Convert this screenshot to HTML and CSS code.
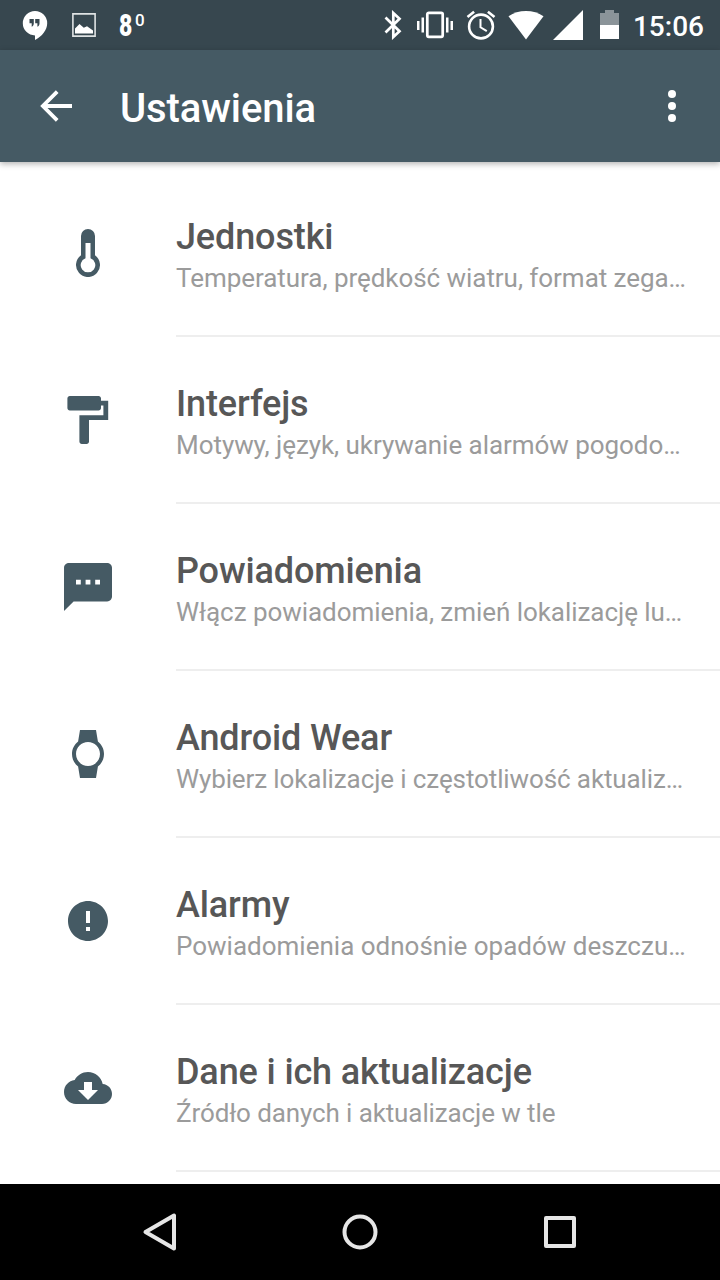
FILE: index.html
```html
<!DOCTYPE html>
<html lang="pl">
<head>
<meta charset="utf-8">
<title>Ustawienia</title>
<link rel="stylesheet" href="styles.css">
</head>
<body>
<div class="screen">
  <div class="status">
    <svg class="hangouts" width="26" height="30" viewBox="0 0 26 30"><path fill="#fff" d="M13 1a12.2 12.2 0 0 0 0 24.4V30c7-3.6 12.2-10 12.2-16.8A12.2 12.2 0 0 0 13 1z"/><path fill="#37474f" d="M7.5 9h4.3v4.5c0 1.6-.8 2.7-2.1 3.2v-3.4H7.500zM13.200 9h4.300v4.500c0 1.600-.8 2.700-2.100 3.200v-3.400h-2.200z"/></svg>
    <svg class="picture" width="24" height="24" viewBox="0 0 24 24"><path fill="none" stroke="#dfe3e4" stroke-width="1.600" d="M.9.9h22.200v22.200H.9z"/><path fill="#fff" d="M3 20.500v-5l4.500-4.500 4.300 3.800 3.200-1.600 6 4.300v3z"/></svg>
    <div class="degrees"><span class="digit">8</span><span class="degree">0</span></div>
    <div class="spacer"></div>
    <svg class="bluetooth" width="20" height="30" viewBox="0 0 20 30"><path fill="none" stroke="#fff" stroke-width="2.700" d="M2.500 7.500l14 13.800-6.200 5.700V3l6.200 5.700L2.500 22.500"/></svg>
    <svg class="vibrate" width="36" height="30" viewBox="0 0 36 30"><rect x="10.300" y="2.800" width="15.400" height="24" rx="1.500" fill="none" stroke="#fff" stroke-width="2.700"/><path fill="#fff" d="M0 11h2.500v9H0zM4.500 7.500H7v15H4.500zM29 7.500h2.500v15H29zM33.500 11H36v9h-2.500z"/></svg>
    <svg class="alarm" width="30" height="30" viewBox="0 0 30 30"><g fill="none" stroke="#fff" stroke-width="2.600"><circle cx="15" cy="16.500" r="11.900"/><path d="M1.500 7l6.600-5.300M28.500 7l-6.600-5.300"/><path stroke-width="2" d="M14.500 9v8.300l6.300 3.900"/></g></svg>
    <svg class="wifi" width="36" height="30" viewBox="0 0 36 30"><path fill="#fff" d="M18 29.500L.5 6.300C5.500 2.900 11.500 1 18 1s12.500 1.900 17.500 5.300z"/></svg>
    <svg class="signal" width="30" height="30" viewBox="0 0 30 30"><path fill="#fff" d="M30 0v30H0z"/></svg>
    <svg class="battery" width="19" height="30" viewBox="0 0 19 30"><path fill="#8b9499" d="M0 3h5V0h9v3h5v13H0z"/><path fill="#fff" d="M0 15h19v14H0z"/></svg>
    <div class="time">15:06</div>
  </div>
  <div class="appbar">
    <svg class="back" width="34" height="34" viewBox="0 0 34 34"><path fill="none" stroke="#fff" stroke-width="3.800" d="M33 17H4M18.200 2.700L3.900 17l14.300 14.300"/></svg>
    <h1 class="heading">Ustawienia</h1>
    <svg class="more" width="8" height="32" viewBox="0 0 8 32"><g fill="#fff"><circle cx="4" cy="4" r="4"/><circle cx="4" cy="16" r="4"/><circle cx="4" cy="28" r="4"/></g></svg>
  </div>
  <div class="list">
    <div class="row">
      <svg class="icon" viewBox="0 0 48 48"><path fill-rule="evenodd" d="M17 7a7 7 0 0 1 14 0v19.300a12 12 0 1 1-14 0zM21.500 14v15.200a7.300 7.300 0 1 0 5 0V14z"/></svg>
      <div class="content"><div class="title">Jednostki</div><div class="sub">Temperatura, prędkość wiatru, format zega…</div></div>
    </div>
    <div class="row">
      <svg class="icon" viewBox="0 0 48 48"><path transform="translate(-6.200 -4.800) scale(2.400)" d="M18 4V3c0-.55-.45-1-1-1H5c-.55 0-1 .45-1 1v4c0 .55.45 1 1 1h12c.55 0 1-.45 1-1V6h1v4H9v11c0 .55.45 1 1 1h2c.55 0 1-.45 1-1v-9h8V4h-3z"/></svg>
      <div class="content"><div class="title">Interfejs</div><div class="sub">Motywy, język, ukrywanie alarmów pogodo…</div></div>
    </div>
    <div class="row">
      <svg class="icon" viewBox="2 2 20 20"><path d="M20 2H4c-1.100 0-1.990.9-1.990 2L2 22l4-4h14c1.100 0 2-.9 2-2V4c0-1.100-.9-2-2-2zM9 11H7V9h2v2zm4 0h-2V9h2v2zm4 0h-2V9h2v2z"/></svg>
      <div class="content"><div class="title">Powiadomienia</div><div class="sub">Włącz powiadomienia, zmień lokalizację lu…</div></div>
    </div>
    <div class="row">
      <svg class="icon" viewBox="0 0 24 24"><path d="M20 12c0-2.540-1.190-4.810-3.040-6.270L16 0H8l-.95 5.730C5.190 7.190 4 9.450 4 12s1.190 4.810 3.050 6.270L8 24h8l.96-5.730C18.810 16.810 20 14.540 20 12zM6 12c0-3.310 2.690-6 6-6s6 2.690 6 6-2.690 6-6 6-6-2.690-6-6z"/></svg>
      <div class="content"><div class="title">Android Wear</div><div class="sub tight">Wybierz lokalizacje i częstotliwość aktualiz…</div></div>
    </div>
    <div class="row">
      <svg class="icon" viewBox="0 0 24 24"><path d="M12 2C6.480 2 2 6.480 2 12s4.480 10 10 10 10-4.480 10-10S17.520 2 12 2zm1 15h-2v-2h2v2zm0-4h-2V7h2v6z"/></svg>
      <div class="content"><div class="title">Alarmy</div><div class="sub loose">Powiadomienia odnośnie opadów deszczu…</div></div>
    </div>
    <div class="row">
      <svg class="icon" viewBox="0 0 24 24"><path d="M19.350 10.040C18.670 6.590 15.640 4 12 4 9.110 4 6.600 5.640 5.350 8.040 2.340 8.360 0 10.910 0 14c0 3.310 2.690 6 6 6h13c2.760 0 5-2.240 5-5 0-2.640-2.050-4.780-4.650-4.960zM17 13l-5 5-5-5h3V9h4v4h3z"/></svg>
      <div class="content"><div class="title">Dane i ich aktualizacje</div><div class="sub tight">Źródło danych i aktualizacje w tle</div></div>
    </div>
  </div>
  <div class="navbar">
    <svg width="40" height="40" viewBox="0 0 40 40"><path d="M34 3.500v33L5.500 20z"/></svg>
    <svg width="40" height="40" viewBox="0 0 40 40"><circle cx="20" cy="20" r="15.500"/></svg>
    <svg width="40" height="40" viewBox="0 0 40 40"><rect x="6" y="6" width="28" height="28"/></svg>
  </div>
</div>
</body>
</html>
```
FILE: styles.css
```css
* { box-sizing: border-box; }
body { margin: 0; background: #fff; font-family: Roboto, "Noto Sans", sans-serif; }
svg { display: block; flex: none; }
.screen { width: 720px; height: 1280px; display: flex; flex-direction: column; overflow: hidden; }

.status { height: 50px; flex: none; background: #37474f; display: flex; align-items: flex-start; padding: 10px 16px 0 22px; color: #fff; }
.picture { margin: 3px 0 0 24px; }
.degrees { display: flex; margin-left: 23px; height: 30px; }
.digit { font-size: 31px; line-height: 31px; font-weight: 900; width: 16px; transform: scaleX(.74); transform-origin: left; }
.degree { font-size: 17px; line-height: 20px; font-weight: 500; }
.spacer { flex: 1; }
.vibrate { margin-left: 14px; }
.alarm { margin-left: 13px; }
.wifi { margin-left: 12px; }
.signal { margin-left: 9px; }
.battery { margin-left: 17px; }
.time { margin-left: 14px; font-size: 28px; line-height: 34px; font-weight: 500; }

.appbar { position: relative; height: 112px; flex: none; background: #455a64; display: flex; align-items: center; padding: 0 44px 0 39px; box-shadow: 0 2px 6px rgba(0, 0, 0, .3); color: #fff; }
.heading { margin: 6px 0 0 47px; flex: 1; font-size: 40px; line-height: 48px; font-weight: 500; letter-spacing: -.1px; }

.list { flex: 1; min-height: 0; overflow: hidden; padding-top: 8px; }
.row { height: 167px; display: flex; padding-left: 64px; }
.icon { width: 48px; height: 48px; margin: 59px 64px 0 0; fill: #455a64; }
.content { flex: 1; min-width: 0; padding: 46px 32px 0 0; border-bottom: 2px solid #eee; }
.title { font-size: 36px; line-height: 42px; font-weight: 500; color: #575757; letter-spacing: -.13px; }
.sub { font-size: 26px; line-height: 40px; color: #9b9b9b; white-space: nowrap; letter-spacing: -.05px; }
.sub.tight { letter-spacing: -.11px; }
.sub.loose { letter-spacing: 0; }

.navbar { height: 96px; flex: none; background: #000; display: flex; justify-content: center; align-items: center; gap: 160px; }
.navbar svg { fill: none; stroke: #e6e6e6; stroke-width: 4; stroke-linejoin: round; }
```
